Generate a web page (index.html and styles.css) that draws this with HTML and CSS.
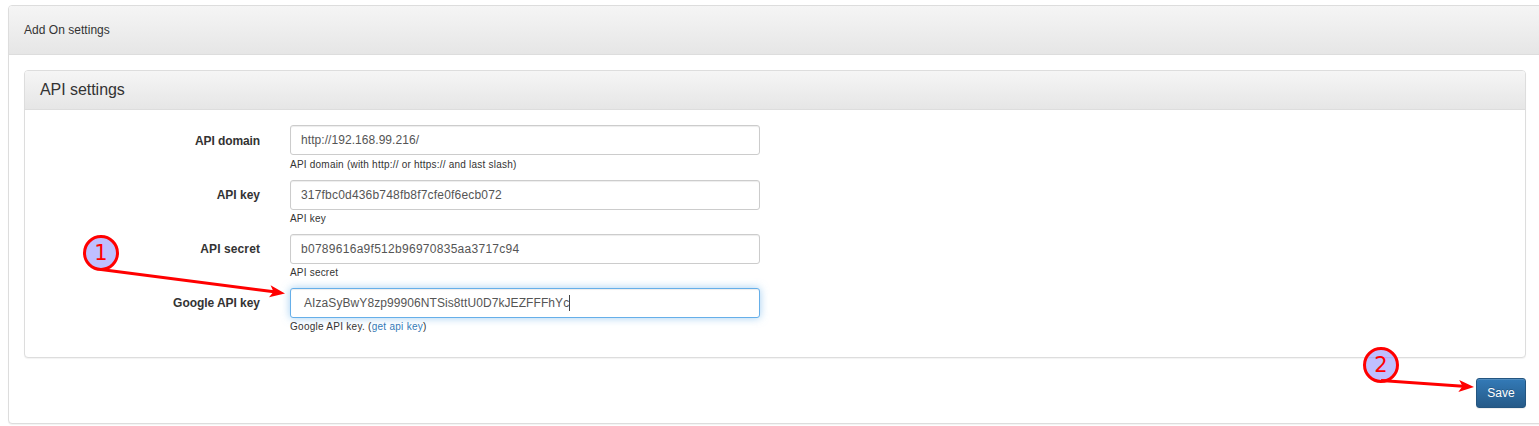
FILE: index.html
```html
<!DOCTYPE html>
<html lang="en">
<head>
<meta charset="utf-8">
<title>Add On settings</title>
<link rel="stylesheet" href="styles.css">
</head>
<body>
<section class="panel outer">
  <header class="panel-head outer-head">Add On settings</header>
  <div class="outer-body">
    <section class="panel inner">
      <header class="panel-head inner-head"><h1 class="title">API settings</h1></header>
      <div class="form">
        <div class="row first">
          <label class="label"><span class="l-domain">API domain</span></label>
          <div class="field">
            <div class="input"><span class="v-domain">http://192.168.99.216/</span></div>
            <p class="help"><span class="h-domain">API domain (with http:// or https:// and last slash)</span></p>
          </div>
        </div>
        <div class="row">
          <label class="label"><span>API key</span></label>
          <div class="field">
            <div class="input"><span class="v-key">317fbc0d436b748fb8f7cfe0f6ecb072</span></div>
            <p class="help"><span class="h-short">API key</span></p>
          </div>
        </div>
        <div class="row">
          <label class="label"><span class="l-secret">API secret</span></label>
          <div class="field">
            <div class="input"><span class="v-secret">b0789616a9f512b96970835aa3717c94</span></div>
            <p class="help"><span class="h-short">API secret</span></p>
          </div>
        </div>
        <div class="row">
          <label class="label"><span class="l-google">Google API key</span></label>
          <div class="field">
            <div class="input focused"><span class="v-google">AIzaSyBwY8zp99906NTSis8ttU0D7kJEZFFFhYc</span><i class="caret"></i></div>
            <p class="help"><span class="h-google">Google API key. (<a class="link">get api key</a>)</span></p>
          </div>
        </div>
      </div>
    </section>
    <div class="actions"><button class="save" type="button">Save</button></div>
  </div>
</section>
<svg class="annotations" width="1539" height="426" viewBox="0 0 1539 426">
  <g fill="none" stroke="#f00" stroke-width="3">
    <circle cx="101" cy="253" r="16.5" fill="#8080ff" fill-opacity=".5"/>
    <path d="M101 269.5L274 291.8"/>
    <circle cx="1381" cy="365" r="16.5" fill="#8080ff" fill-opacity=".5"/>
    <path d="M1381 380.5L1463 386.3"/>
  </g>
  <g fill="#f00">
    <path d="M285 293.4L269 297.3L273.5 291.8L270.6 285.3Z"/>
    <path d="M1474 387.1L1458.3 392L1462.5 386.3L1459.2 380Z"/>
  </g>
  <g class="number">
    <text x="101" y="260">1</text>
    <text x="1381" y="372">2</text>
  </g>
</svg>
</body>
</html>
```

FILE: styles.css
```css
* { box-sizing: border-box; }
body {
  margin: 0;
  padding: 5px 0 0 8px;
  height: 426px;
  overflow: hidden;
  background: #fff;
  color: #333;
  font: 12px/18px "Liberation Sans", Arial, sans-serif;
}
.panel {
  border: 1px solid #ddd;
  border-radius: 4px;
  background: #fff;
  box-shadow: 0 1px 1px rgba(0, 0, 0, .05);
}
.outer { width: 1535px; height: 419px; }
.panel-head {
  border-bottom: 1px solid #ddd;
  border-radius: 3px 3px 0 0;
  background: linear-gradient(#f5f5f5, #e6e6e6);
}
.outer-head { height: 49px; padding: 15px; letter-spacing: .03px; }
.outer-body { padding: 15px 16px 0 15px; }
.inner { height: 288px; }
.inner-head { height: 39px; padding: 10px 15px; }
.title { margin: 0; font-size: 16px; line-height: 18px; font-weight: normal; letter-spacing: -.05px; }
.form { padding-top: 15px; }
.row { display: flex; height: 54px; }
.first { height: 55px; }
.label { width: 235px; padding-top: 6px; text-align: right; font-weight: bold; }
.first .label { padding-top: 7px; }
.field { width: 470px; margin-left: 30px; }
.input {
  display: flex;
  align-items: center;
  height: 30px;
  padding: 0 10px;
  border: 1px solid #ccc;
  border-radius: 3px;
  background: #fff;
  box-shadow: inset 0 1px 1px rgba(0, 0, 0, .075);
  color: #555;
}
.focused {
  padding-left: 13px;
  border-color: #66afe9;
  box-shadow: inset 0 1px 1px rgba(0, 0, 0, .075), 0 0 8px rgba(102, 175, 233, .6);
}
.caret { width: 1px; height: 16px; background: #444; }
.help { margin: 0; padding-top: 1px; font-size: 10px; line-height: 16px; }
.first .help { padding-top: 2px; }
.l-domain { letter-spacing: -.1px; }
.l-secret { letter-spacing: .1px; }
.l-google { letter-spacing: -.05px; }
.v-domain { letter-spacing: .06px; }
.v-key { letter-spacing: .19px; }
.v-secret { letter-spacing: .28px; }
.v-google { letter-spacing: .08px; }
.h-domain { letter-spacing: .22px; }
.h-short { letter-spacing: .2px; }
.h-google { letter-spacing: .27px; }
.link { color: #337ab7; }
.actions { display: flex; justify-content: flex-end; padding-top: 20px; }
.save {
  width: 50px;
  height: 30px;
  padding: 0;
  border: 1px solid #245580;
  border-radius: 3px;
  background: linear-gradient(#337ab7, #265a88);
  box-shadow: inset 0 1px 0 rgba(255, 255, 255, .15), 0 1px 1px rgba(0, 0, 0, .075);
  color: #fff;
  font: 12px/18px "Liberation Sans", Arial, sans-serif;
  text-shadow: 0 -1px 0 rgba(0, 0, 0, .2);
}
.annotations { position: absolute; left: 0; top: 0; pointer-events: none; }
.number { fill: #f00; font: 21px "DejaVu Sans", sans-serif; text-anchor: middle; }
```
